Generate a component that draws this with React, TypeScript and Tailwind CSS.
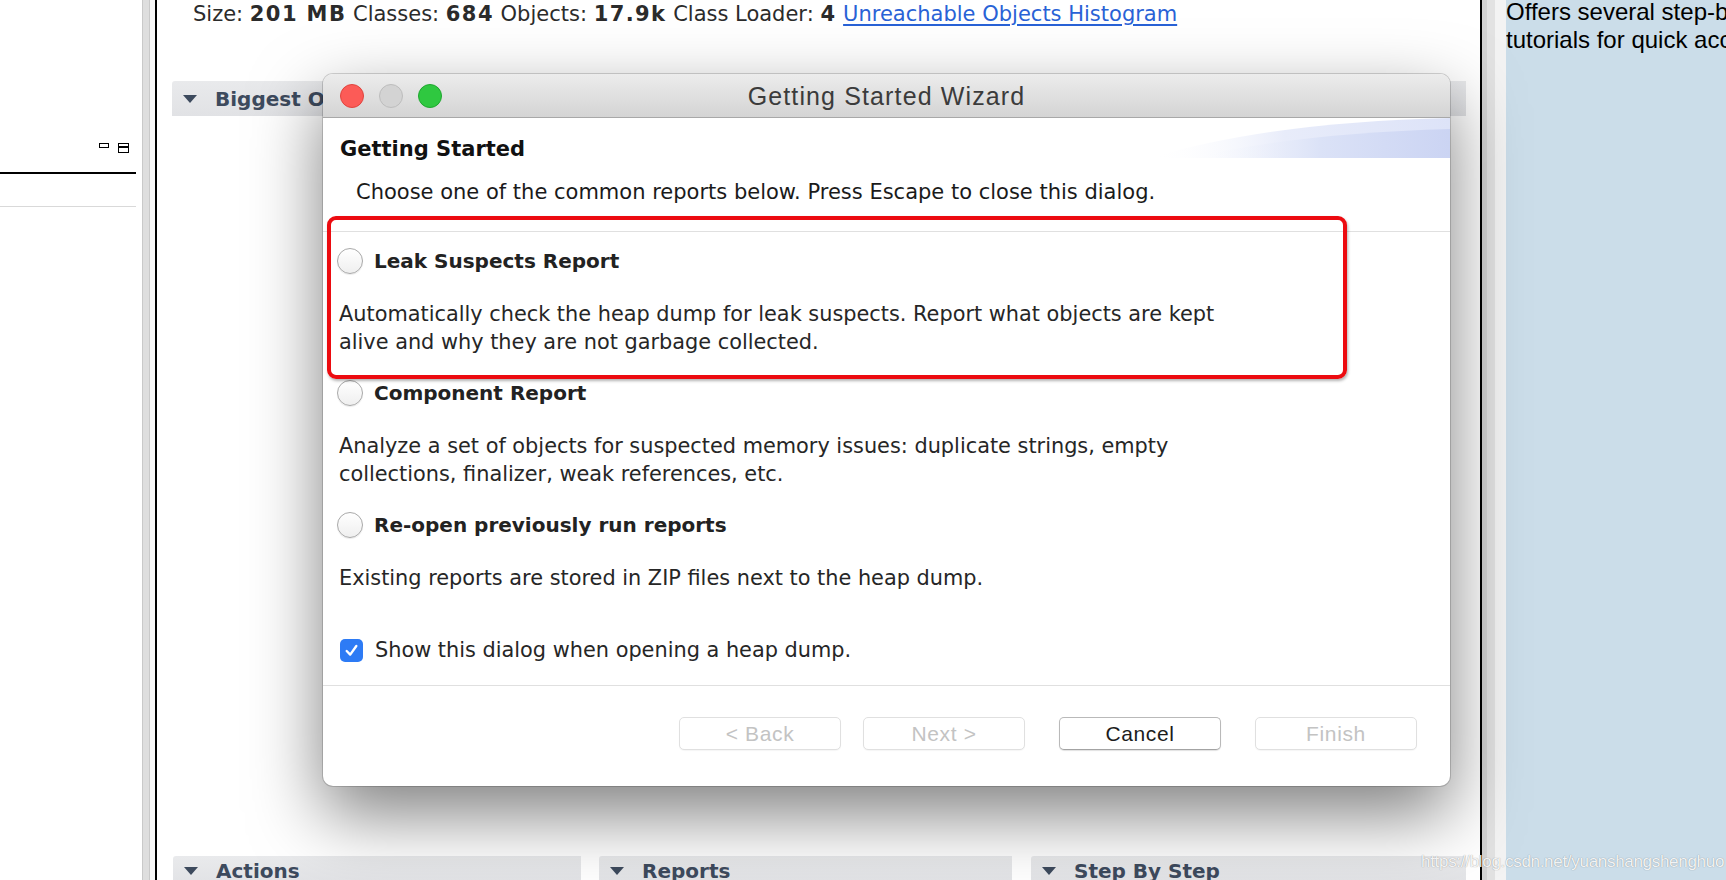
import React from "react";

function Radio() {
  return (
    <div className="h-[26px] w-[26px] shrink-0 rounded-full border border-[#a9a9a9] bg-linear-to-b from-white to-[#efefef] shadow-[0_1px_1px_rgba(0,0,0,0.08)]" />
  );
}

function SectionBar({ label, className }: { label: string; className: string }) {
  return (
    <div
      className={`flex shrink-0 items-center rounded-tl-[3px] bg-linear-to-b from-[#e9eaec] to-[#e1e2e5] ${className}`}
    >
      <svg width="14" height="8" viewBox="0 0 14 8" className="ml-[11px] shrink-0">
        <path d="M0 0 H14 L7 8 Z" fill="#3d4a5d" />
      </svg>
      <span className="ml-[18px] whitespace-nowrap text-[20px] font-bold text-[#3d4a5d]">{label}</span>
    </div>
  );
}

function Btn({ label, enabled }: { label: string; enabled?: boolean }) {
  return (
    <div
      className={
        enabled
          ? "flex h-[33px] w-[162px] items-center justify-center rounded-[5px] border border-[#b9b9b9] border-b-[#a3a3a3] bg-white text-[21px] tracking-[0.03em] text-[#1c1c1c] shadow-[0_1px_1px_rgba(0,0,0,0.12)] font-['Liberation_Sans',sans-serif]"
          : "flex h-[33px] w-[162px] items-center justify-center rounded-[5px] border border-[#e0e0e0] bg-white text-[21px] tracking-[0.03em] text-[#c3c3c3] shadow-[0_1px_1px_rgba(0,0,0,0.04)] font-['Liberation_Sans',sans-serif]"
      }
    >
      {label}
    </div>
  );
}

export default function App() {
  return (
    <div className="relative flex h-[880px] w-[1726px] overflow-hidden bg-white font-['DejaVu_Sans',sans-serif]">
      {/* Left panel */}
      <div className="flex w-[142px] shrink-0 flex-col">
        <div className="mt-[143px] flex w-[136px] items-start justify-end gap-[9px] pr-[7px]">
          <div className="h-[5px] w-[10px] border-[1.5px] border-black" />
          <div className="flex h-[10px] w-[11px] flex-col border-[1.5px] border-black">
            <div className="mt-[2px] h-[1.5px] bg-black" />
          </div>
        </div>
        <div className="mt-[19px] h-[2px] w-[136px] bg-black" />
        <div className="mt-[32px] h-px w-[136px] bg-[#d9d9d9]" />
      </div>

      {/* Left sash */}
      <div className="w-[8px] shrink-0 border-x border-[#c9c9c9] bg-[#dedede]" />
      <div className="w-[5px] shrink-0 bg-[#f7f7f7]" />
      <div className="w-[2px] shrink-0 bg-black" />

      {/* Main editor */}
      <div className="flex w-[1323px] shrink-0 flex-col bg-white">
        <div className="h-[28px] whitespace-nowrap pl-[36px] text-[21px] leading-[28px] text-[#2b2b2b]">
          Size: <b className="tracking-[1.4px]">201 MB</b> Classes: <b className="tracking-[1.4px]">684</b> Objects:{" "}
          <b className="tracking-[1.4px]">17.9k</b> Class Loader: <b className="tracking-[1.4px]">4</b>{" "}
          <span className="text-[#2962d6] underline decoration-[1.5px] underline-offset-[3px]">
            Unreachable Objects Histogram
          </span>
        </div>
        <SectionBar label="Biggest Objects by Retained Size" className="mt-[53px] ml-[15px] mr-[14px] h-[35px]" />
        <div className="flex-1" />
        <div className="flex h-[24px] shrink-0 items-start overflow-hidden pl-[16px]">
          <SectionBar label="Actions" className="h-[30px] w-[408px]" />
          <SectionBar label="Reports" className="ml-[18px] h-[30px] w-[413px]" />
          <SectionBar label="Step By Step" className="ml-[19px] h-[30px] w-[435px]" />
        </div>
      </div>

      {/* Right sash */}
      <div className="w-[2px] shrink-0 bg-black" />
      <div className="w-[13px] shrink-0 border-l-[5px] border-[#d2d2d2] bg-[#e2e2e2]" />
      <div className="w-[11px] shrink-0 bg-[#f3f3f3]" />

      {/* Right blue panel */}
      <div className="w-[220px] shrink-0 overflow-hidden bg-[#cbdde9]">
        <div className="-mt-[2px] whitespace-nowrap text-[24px] leading-[28px] text-black font-['Liberation_Sans',sans-serif]">
          Offers several step-by-step
          <br />
          tutorials for quick access
        </div>
      </div>

      {/* Dialog */}
      <div className="absolute left-[323px] top-[74px] flex h-[712px] w-[1127px] flex-col rounded-[10px] bg-white shadow-[0_28px_70px_rgba(0,0,0,0.5),0_0_0_1px_rgba(0,0,0,0.16)]">
        {/* Title bar */}
        <div className="grid h-[44px] shrink-0 grid-cols-[1fr_auto_1fr] items-center rounded-t-[10px] border-b border-[#a8a8a8] bg-linear-to-b from-[#ececec] to-[#d4d4d4]">
          <div className="flex items-center gap-[15px] pl-[17px]">
            <div className="h-[24px] w-[24px] rounded-full border border-[#e0443e] bg-[#fc5b57]" />
            <div className="h-[24px] w-[24px] rounded-full border border-[#bdbdbd] bg-[#d3d3d3]" />
            <div className="h-[24px] w-[24px] rounded-full border border-[#1fa72f] bg-[#2fc840]" />
          </div>
          <div className="whitespace-nowrap pt-[2px] text-[25px] tracking-[0.045em] text-[#3b3b3b] font-['Liberation_Sans',sans-serif]">
            Getting Started Wizard
          </div>
          <div />
        </div>

        {/* Header */}
        <div className="relative h-[114px] shrink-0 border-b border-[#e0e0e0]">
          <svg
            className="absolute right-0 top-0"
            width="300"
            height="40"
            viewBox="0 0 300 40"
          >
            <defs>
              <linearGradient id="sw1" x1="0" y1="0" x2="1" y2="0">
                <stop offset="0" stopColor="#ffffff" stopOpacity="0" />
                <stop offset="0.45" stopColor="#e8ecfa" />
                <stop offset="1" stopColor="#dde3f8" />
              </linearGradient>
              <linearGradient id="sw2" x1="0" y1="0" x2="1" y2="0">
                <stop offset="0" stopColor="#ffffff" stopOpacity="0" />
                <stop offset="0.5" stopColor="#dbe2f7" />
                <stop offset="1" stopColor="#cbd4f3" />
              </linearGradient>
            </defs>
            <path d="M0 40 Q120 4 300 0 L300 40 Z" fill="url(#sw1)" />
            <path d="M40 40 Q150 15 300 11 L300 40 Z" fill="url(#sw2)" />
          </svg>
          <div className="relative pl-[17px] pt-[17px] text-[21px] font-bold leading-[28px] text-[#111]">
            Getting Started
          </div>
          <div className="relative mt-[15px] whitespace-nowrap pl-[33px] text-[21px] leading-[28px] text-[#1a1a1a]">
            Choose one of the common reports below. Press Escape to close this dialog.
          </div>
        </div>

        {/* Body */}
        <div className="flex flex-1 flex-col pl-[14px] pt-[15px] text-[20.85px] leading-[28px] text-[#262626]">
          <div className="flex h-[28px] items-center gap-[11px]">
            <Radio />
            <span className="whitespace-nowrap text-[20px] font-bold text-[#222]">Leak Suspects Report</span>
          </div>
          <div className="mt-[25px] whitespace-nowrap pl-[2px]">
            Automatically check the heap dump for leak suspects. Report what objects are kept
            <br />
            alive and why they are not garbage collected.
          </div>

          <div className="mt-[23px] flex h-[28px] items-center gap-[11px]">
            <Radio />
            <span className="whitespace-nowrap text-[20px] font-bold text-[#222]">Component Report</span>
          </div>
          <div className="mt-[25px] whitespace-nowrap pl-[2px]">
            Analyze a set of objects for suspected memory issues: duplicate strings, empty
            <br />
            collections, finalizer, weak references, etc.
          </div>

          <div className="mt-[23px] flex h-[28px] items-center gap-[11px]">
            <Radio />
            <span className="whitespace-nowrap text-[20px] font-bold text-[#222]">Re-open previously run reports</span>
          </div>
          <div className="mt-[25px] whitespace-nowrap pl-[2px]">
            Existing reports are stored in ZIP files next to the heap dump.
          </div>

          <div className="mt-[44px] flex h-[28px] items-center gap-[12px] pl-[3px]">
            <div className="flex h-[23px] w-[23px] shrink-0 items-center justify-center rounded-[5px] bg-[#2d7bf5]">
              <svg width="15" height="15" viewBox="0 0 14 14">
                <path d="M2.5 7.5 L5.8 10.8 L11.5 2.8" fill="none" stroke="white" strokeWidth="2.2" strokeLinecap="round" strokeLinejoin="round" />
              </svg>
            </div>
            <span className="whitespace-nowrap">Show this dialog when opening a heap dump.</span>
          </div>
        </div>

        {/* Footer */}
        <div className="flex h-[101px] shrink-0 items-start justify-end border-t border-[#e0e0e0] pr-[33px] pt-[31px]">
          <Btn label="< Back" />
          <div className="w-[22px]" />
          <Btn label="Next >" />
          <div className="w-[34px]" />
          <Btn label="Cancel" enabled />
          <div className="w-[34px]" />
          <Btn label="Finish" />
        </div>

        {/* Red annotation box */}
        <div className="absolute left-[4px] top-[142px] h-[163px] w-[1020px] rounded-[9px] border-[4px] border-[#ec0b10] shadow-[1px_2px_3px_rgba(0,0,0,0.3)]" />
      </div>

      {/* Watermark */}
      <div className="absolute left-[1421px] top-[849px] whitespace-nowrap text-[17px] tracking-[-0.3px] text-white/90 [text-shadow:0_0_1px_rgba(0,0,0,0.45)] font-['Liberation_Sans',sans-serif]">
        https://blog.csdn.net/yuanshangshenghuo
      </div>
    </div>
  );
}
